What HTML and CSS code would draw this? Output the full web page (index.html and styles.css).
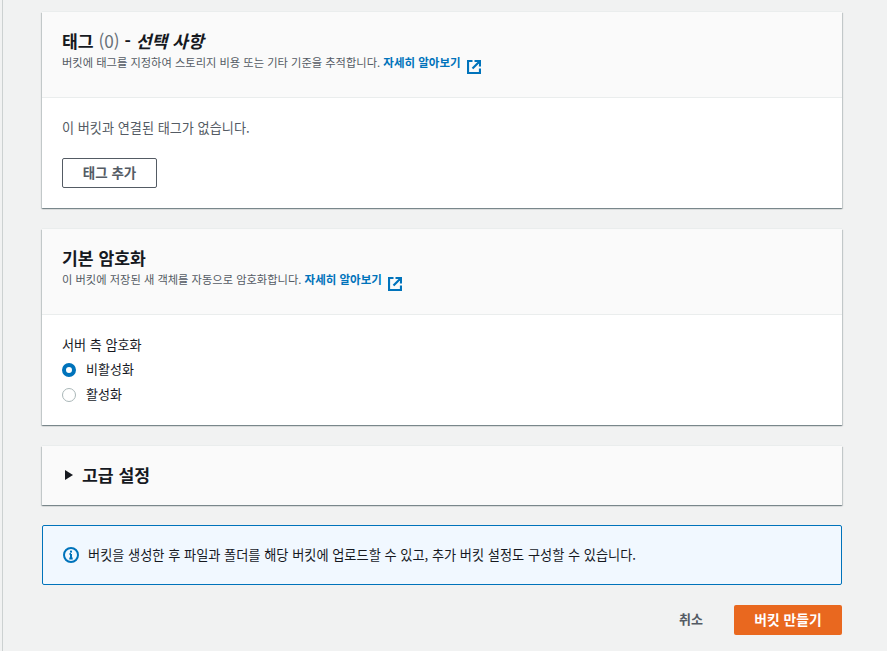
FILE: index.html
```html
<!DOCTYPE html>
<html lang="ko">
<head>
<meta charset="utf-8">
<title>버킷 만들기</title>
<link rel="stylesheet" href="styles.css">
</head>
<body>
<main class="content">
  <section class="card">
    <header class="card-head">
      <h2 class="title">태그 <span class="count">(0)</span> - <em>선택 사항</em></h2>
      <p class="desc">버킷에 태그를 지정하여 스토리지 비용 또는 기타 기준을 추적합니다. <a class="link" href="#">자세히 알아보기</a>
        <svg class="ext" viewBox="0 0 14 14"><path d="M5.5 1H1v12h12V8.5" /><path d="M7.5 1H13v5.5M13 1L5.5 8.5" /></svg></p>
    </header>
    <div class="card-body tags">
      <p class="empty">이 버킷과 연결된 태그가 없습니다.</p>
      <button class="btn">태그 추가</button>
    </div>
  </section>

  <section class="card">
    <header class="card-head">
      <h2 class="title">기본 암호화</h2>
      <p class="desc">이 버킷에 저장된 새 객체를 자동으로 암호화합니다. <a class="link" href="#">자세히 알아보기</a>
        <svg class="ext" viewBox="0 0 14 14"><path d="M5.5 1H1v12h12V8.5" /><path d="M7.5 1H13v5.5M13 1L5.5 8.5" /></svg></p>
    </header>
    <div class="card-body enc">
      <div class="label">서버 측 암호화</div>
      <div class="radio"><span class="dot on"></span><span class="radio-text">비활성화</span></div>
      <div class="radio"><span class="dot"></span><span class="radio-text">활성화</span></div>
    </div>
  </section>

  <section class="card adv">
    <svg class="caret" viewBox="0 0 8 10"><path d="M0 0l8 5-8 5z"/></svg>
    <h2 class="title">고급 설정</h2>
  </section>

  <div class="alert">
    <svg class="info" viewBox="0 0 16 16"><circle cx="8" cy="8" r="7" /><path d="M8 7v4.5M6.3 11.5h3.4M6.5 7H8" /><rect x="7" y="3.6" width="2" height="2" class="i-dot"/></svg>
    <span class="alert-text">버킷을 생성한 후 파일과 폴더를 해당 버킷에 업로드할 수 있고, 추가 버킷 설정도 구성할 수 있습니다.</span>
  </div>

  <footer class="actions">
    <button class="cancel">취소</button>
    <button class="primary">버킷 만들기</button>
  </footer>
</main>
</body>
</html>
```
FILE: styles.css
```css
* { box-sizing: border-box; }
html, body { margin: 0; height: 651px; overflow: hidden; }
body {
  background: #f1f2f2;
  font-family: "Noto Sans CJK KR", "Noto Sans", sans-serif;
  color: #16191f;
  font-size: 13px;
}
.content {
  margin-left: 2px;
  height: 651px;
  border-left: 1px solid #ccd1d1;
  padding: 12px 45px 0 39px;
  display: flex;
  flex-direction: column;
  gap: 21px;
}
.card {
  background: #fff;
  box-shadow: 0 1px 1px 0 rgba(0,28,36,.3), 1px 1px 1px 0 rgba(0,28,36,.15), -1px 1px 1px 0 rgba(0,28,36,.15), 0 -1px 0 0 #eaeded;
}
.card-head {
  height: 86px;
  background: #fafafa;
  border-bottom: 1px solid #eaeded;
  padding: 17px 20px 0;
}
.title {
  margin: 0;
  font-size: 17.2px;
  line-height: 24px;
  font-weight: 700;
  color: #16191f;
}
.title em { font-style: italic; }
.count { font-weight: 400; color: #687078; }
.desc {
  margin: 0;
  font-size: 11.25px;
  line-height: 18px;
  color: #545b64;
  display: block;
}
.link { color: #0073bb; font-weight: 700; text-decoration: none; font-size: 11.5px; }
.ext {
  width: 14px;
  height: 14px;
  margin-left: 3px;
  vertical-align: -7px;
  fill: none;
  stroke: #0073bb;
  stroke-width: 2.2;
}
.card-body { padding: 19px 20px 20px; }
.tags { height: 110px; }
.empty { margin: 0 0 20px; font-size: 13.15px; line-height: 21px; color: #545b64; }
.btn {
  display: block;
  width: 95px;
  height: 30px;
  background: #fff;
  border: 1px solid #545b64;
  border-radius: 2px;
  font: 700 13.5px "Noto Sans CJK KR", sans-serif;
  color: #545b64;
  padding: 0 0 2px;
}
.enc { height: 110px; }
.label { font-size: 13.1px; line-height: 21px; margin-bottom: 2px; color: #16191f; }
.radio { display: flex; align-items: center; gap: 10px; height: 25px; font-size: 13px; color: #16191f; }
.radio-text { margin-bottom: 2px; }
.dot { width: 14px; height: 14px; border-radius: 50%; border: 1px solid #aab7b8; background: #fff; }
.dot.on { border: 4px solid #0073bb; }
.adv {
  height: 59px;
  background: #fafafa;
  display: flex;
  align-items: center;
  gap: 9px;
  padding: 0 20px 2px 23px;
}
.caret { width: 8px; height: 10px; fill: #16191f; }
.alert {
  height: 60px;
  margin-top: -1px;
  background: #f1f8ff;
  border: 1px solid #0073bb;
  border-radius: 2px;
  display: flex;
  align-items: center;
  gap: 9px;
  padding: 0 20px;
  font-size: 13.2px;
  color: #16191f;
}
.alert-text { margin-bottom: 2px; }
.info { width: 16px; height: 16px; fill: none; stroke: #0073bb; stroke-width: 2; flex: none; }
.i-dot { fill: #0073bb; stroke: none; }
.actions {
  display: flex;
  justify-content: flex-end;
  align-items: center;
  gap: 31px;
  margin-top: -1px;
}
.cancel {
  border: 0;
  background: none;
  padding: 0 0 3px;
  font: 700 13px "Noto Sans CJK KR", sans-serif;
  color: #545b64;
}
.primary {
  width: 108px;
  height: 30px;
  border: 0;
  border-radius: 2px;
  background: #e9681f;
  color: #fff;
  padding: 0 0 2px;
  font: 700 13.8px "Noto Sans CJK KR", sans-serif;
}
```
